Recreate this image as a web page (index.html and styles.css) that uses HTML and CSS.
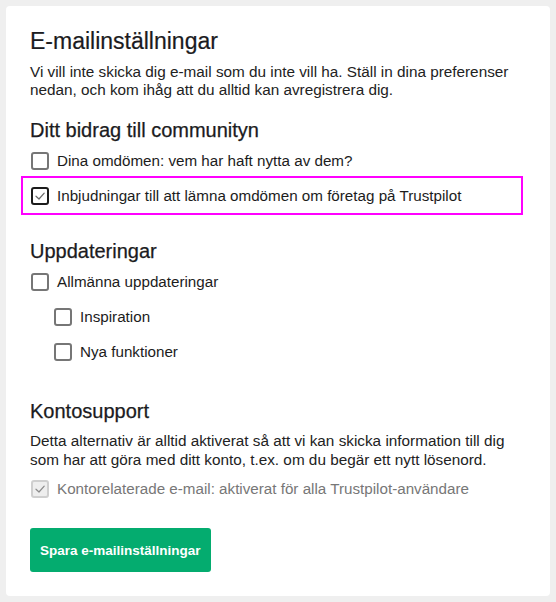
FILE: index.html
```html
<!DOCTYPE html>
<html lang="sv">
<head>
<meta charset="utf-8">
<title>E-mailinställningar</title>
<link rel="stylesheet" href="styles.css">
</head>
<body>
<main class="card">
  <h1 class="title">E-mailinställningar</h1>
  <p class="intro">Vi vill inte skicka dig e-mail som du inte vill ha. Ställ in dina preferenser nedan, och kom ihåg att du alltid kan avregistrera dig.</p>

  <section class="group group-first">
    <h2 class="group-title">Ditt bidrag till communityn</h2>
    <label class="opt"><span class="box"></span><span class="opt-text">Dina omdömen: vem har haft nytta av dem?</span></label>
    <label class="opt opt-highlight"><span class="box box-checked"><svg viewBox="0 0 14 14" width="14" height="14"><polyline points="3,7.2 6,10 11.2,4.2" fill="none" stroke="#6a6a6a" stroke-width="1.2" stroke-linecap="round" stroke-linejoin="round"/></svg></span><span class="opt-text">Inbjudningar till att lämna omdömen om företag på Trustpilot</span></label>
  </section>

  <section class="group group-updates">
    <h2 class="group-title">Uppdateringar</h2>
    <label class="opt"><span class="box"></span><span class="opt-text">Allmänna uppdateringar</span></label>
    <label class="opt opt-sub"><span class="box"></span><span class="opt-text">Inspiration</span></label>
    <label class="opt opt-sub"><span class="box"></span><span class="opt-text">Nya funktioner</span></label>
  </section>

  <section class="group group-account">
    <h2 class="group-title">Kontosupport</h2>
    <p class="note">Detta alternativ är alltid aktiverat så att vi kan skicka information till dig som har att göra med ditt konto, t.ex. om du begär ett nytt lösenord.</p>
    <label class="opt opt-disabled"><span class="box box-disabled"><svg viewBox="0 0 14 14" width="14" height="14"><polyline points="3,7.2 6,10 11.2,4.2" fill="none" stroke="#8a8a8a" stroke-width="1.2" stroke-linecap="round" stroke-linejoin="round"/></svg></span><span class="opt-text">Kontorelaterade e-mail: aktiverat för alla Trustpilot-användare</span></label>
  </section>

  <div class="actions">
    <button class="save" type="button">Spara e-mailinställningar</button>
  </div>
</main>
</body>
</html>
```

FILE: styles.css
```css
* { box-sizing: border-box; }

html, body {
  margin: 0;
  padding: 0;
}

body {
  background: #efefef;
  padding: 6px;
  font-family: "Liberation Sans", Arial, sans-serif;
  color: #1c1c1c;
}

.card {
  background: #ffffff;
  border-radius: 4px;
  padding: 24px;
  min-height: 590px;
}

.title {
  margin: 0;
  font-size: 23px;
  line-height: 22px;
  font-weight: normal;
  color: #1b1b21;
  -webkit-text-stroke: 0.2px #1b1b21;
}

.intro {
  margin: 11px 0 0 0;
  font-size: 15.3px;
  line-height: 18px;
  color: #222222;
}

.group {
  display: flex;
  flex-direction: column;
}

.group-first { margin-top: 20px; }
.group-updates { margin-top: 27px; }
.group-account { margin-top: 31px; }

.group-title {
  margin: 0 0 2px 0;
  font-size: 20px;
  line-height: 22px;
  font-weight: normal;
  color: #1b1b21;
  -webkit-text-stroke: 0.25px #1b1b21;
}

.opt {
  position: relative;
  display: flex;
  align-items: center;
  gap: 8px;
  height: 35px;
  padding-left: 1px;
  font-size: 15.2px;
  color: #1c1c1c;
}

.opt-sub { padding-left: 24px; }

.box {
  flex: none;
  width: 18px;
  height: 18px;
  border: 2px solid #767676;
  border-radius: 3px;
  display: flex;
  align-items: center;
  justify-content: center;
  background: #fff;
}

.box-checked { border-color: #1c1c1c; }

.box-disabled {
  border-color: #cfcfcf;
  background: #eeeeee;
}

.opt-disabled { color: #777777; }

.opt-highlight::after {
  content: "";
  position: absolute;
  left: -9px;
  right: 3px;
  top: -2px;
  bottom: -2px;
  border: 2px solid #ff00ff;
  pointer-events: none;
}

.note {
  margin: 7px 0 2px 0;
  font-size: 15.3px;
  line-height: 19px;
  color: #222222;
}

.actions {
  margin-top: 22px;
  display: flex;
}

.save {
  height: 44px;
  padding: 0 10px;
  border: none;
  border-radius: 3px;
  background: #04ac6f;
  color: #ffffff;
  font-family: "Liberation Sans", Arial, sans-serif;
  font-weight: bold;
  font-size: 13.5px;
  cursor: pointer;
}
```
